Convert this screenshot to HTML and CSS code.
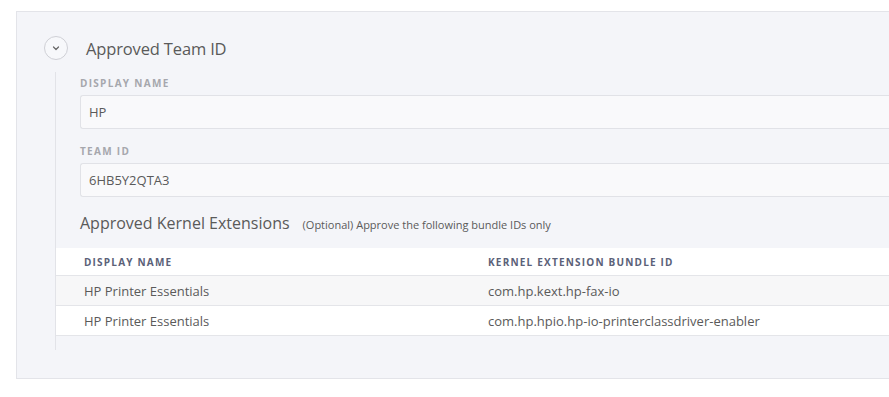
FILE: index.html
```html
<!DOCTYPE html>
<html lang="en">
<head>
  <meta charset="UTF-8">
  <title>Approved Team ID</title>
  <link rel="stylesheet" href="styles.css">
</head>
<body>
  <div class="panel">
    <div class="panel-header">
      <button class="toggle" type="button">
        <svg width="10" height="10" viewBox="0 0 10 10"><path d="M2.5 4 L5 6.5 L7.5 4" fill="none" stroke="#666" stroke-width="1.2" stroke-linecap="round" stroke-linejoin="round"/></svg>
      </button>
      <h2>Approved Team ID</h2>
    </div>

    <div class="panel-body">
      <div class="field">
        <label>Display Name</label>
        <div class="input">HP</div>
      </div>
      <div class="field">
        <label>Team ID</label>
        <div class="input">6HB5Y2QTA3</div>
      </div>

      <div class="section-title">
        <h3>Approved Kernel Extensions</h3>
        <span class="hint">(Optional) Approve the following bundle IDs only</span>
      </div>

      <table class="kext-table">
        <thead>
          <tr><th>Display Name</th><th>Kernel Extension Bundle ID</th></tr>
        </thead>
        <tbody>
          <tr><td>HP Printer Essentials</td><td>com.hp.kext.hp-fax-io</td></tr>
          <tr><td>HP Printer Essentials</td><td>com.hp.hpio.hp-io-printerclassdriver-enabler</td></tr>
        </tbody>
      </table>
    </div>
  </div>
</body>
</html>
```

FILE: styles.css
```css
body {
  margin: 0;
  background: #fff;
  font-family: 'Open Sans', 'Liberation Sans', sans-serif;
  color: #5a5a5a;
}
.panel {
  margin: 11px 0 0 16px;
  background: #f4f5f9;
  border: 1px solid #e3e4e9;
  border-right: none;
  padding: 24px 0 0 0;
  height: 368px;
  box-sizing: border-box;
}
.panel-header {
  display: flex;
  align-items: center;
  padding-left: 27px;
  gap: 18px;
}
.toggle {
  width: 24px;
  height: 24px;
  border-radius: 50%;
  border: 1px solid #cfd0d6;
  background: #f7f8fb;
  padding: 0;
  display: flex;
  align-items: center;
  justify-content: center;
}
.panel-header h2 {
  margin: 0;
  font-size: 16.5px;
  font-weight: 400;
  color: #5a5a5a;
  letter-spacing: -0.15px;
}
.panel-body {
  margin: 12px 0 0 38px;
  border-left: 1px solid #e2e3e8;
  padding-top: 4px;
  height: 278px;
  box-sizing: border-box;
}
.field {
  padding-left: 24px;
  margin-bottom: 15px;
}
.field label {
  display: block;
  font-size: 10px;
  font-weight: 700;
  letter-spacing: 1.3px;
  text-transform: uppercase;
  color: #a6a7ad;
  line-height: 14px;
  margin-bottom: 5px;
}
.input {
  background: #f9f9fb;
  border: 1px solid #e1e2e7;
  border-right: none;
  border-radius: 3px 0 0 3px;
  height: 32px;
  line-height: 32px;
  padding-left: 8px;
  font-size: 13px;
  color: #5a5a5a;
}
.section-title {
  display: flex;
  align-items: baseline;
  gap: 13px;
  padding-left: 24px;
  margin-top: 10px;
  height: 36px;
}
.section-title h3 {
  margin: 0;
  font-size: 16px;
  font-weight: 400;
  color: #5a5a5a;
}
.hint {
  font-size: 11px;
  color: #5a5a5a;
}
.kext-table {
  width: 100%;
  border-collapse: collapse;
  font-size: 13px;
}
.kext-table th {
  text-align: left;
  font-size: 10px;
  font-weight: 700;
  letter-spacing: 1.2px;
  text-transform: uppercase;
  color: #5b6178;
  background: #fff;
  height: 27px;
  padding: 0 0 0 28px;
  border-bottom: 1px solid #e4e5e9;
}
.kext-table td {
  height: 29px;
  padding: 0 0 0 28px;
  color: #5a5a5a;
  border-bottom: 1px solid #e4e5e9;
  background: #fff;
}
.kext-table tbody tr:nth-child(odd) td {
  background: #f7f7f8;
}
.kext-table th:first-child,
.kext-table td:first-child {
  width: 376px;
}
```
